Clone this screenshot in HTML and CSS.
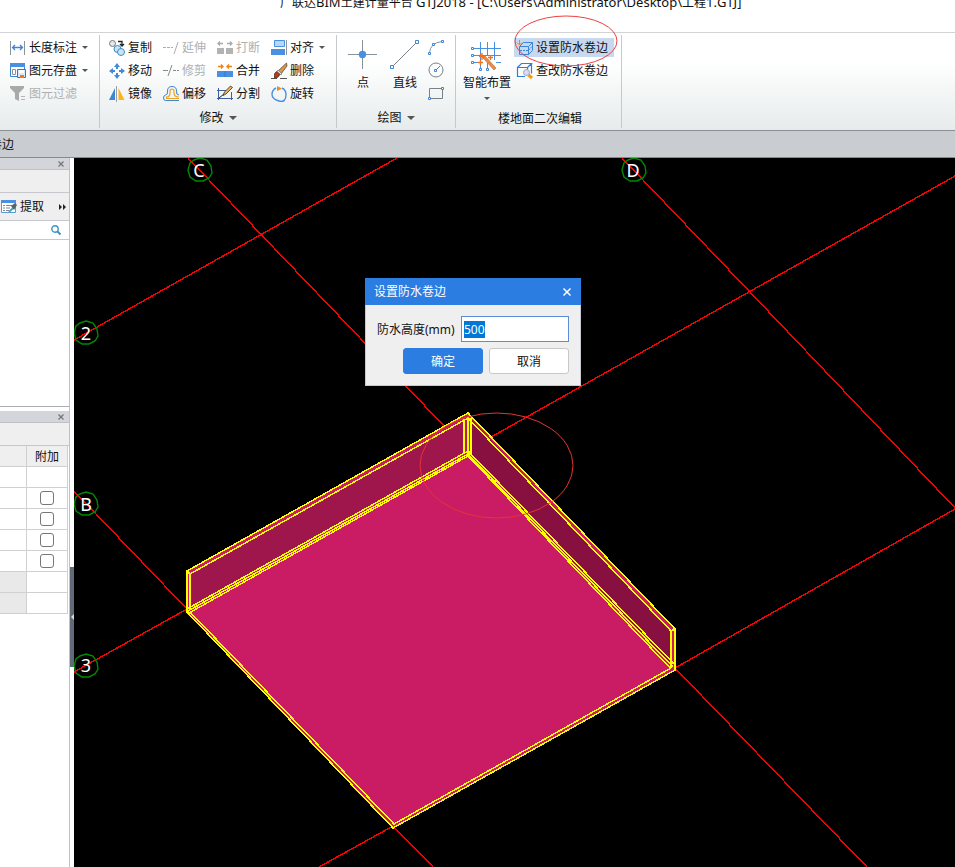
FILE: index.html
```html
<!DOCTYPE html>
<html lang="zh">
<head>
    <meta charset="UTF-8">
    <meta name="viewport" content="width=device-width, initial-scale=1.0">
    <title>广联达BIM土建计量平台 GTJ2018</title>
    <link rel="stylesheet" href="styles.css">
</head>
<body>
    <header class="titlebar">
        <h1><span>广联达</span>BIM<span>土建计量平台</span> GTJ2018 - [C:\Users\Administrator\Desktop\<span>工程</span>1.GTJ]</h1>
    </header>

    <!-- 功能区 -->
    <nav class="ribbon">
        <section class="group group-common">
            <div class="tools">
                <button class="tool" type="button">
                    <svg class="icon" viewBox="0 0 16 16"><path d="M.5 1v14M14.500 1v14" stroke="#8c9399"/><path d="M3 7.500h9M5 5 2.500 7.500 5 10M10 5l2.500 2.500L10 10" stroke="#3c86d8" stroke-width="1.300"/></svg>
                    长度标注<i class="caret"></i>
                </button>
                <button class="tool" type="button">
                    <svg class="icon" viewBox="0 0 16 16"><path d="M.5 1.500h14v12H.5z" fill="#fff" stroke="#3c86d8"/><path d="M0 0h15v4H0z" fill="#4a90e2"/><path d="M2.500 6.500h3v5h-3z" stroke="#8c9399"/><path d="M7.500 6.500h8v8h-8z" fill="#dcebfb" stroke="#2f78c8"/><path d="M9 7h5v3H9z" fill="#fff"/><path d="M10 12h4v3h-4z" fill="#f07820"/></svg>
                    图元存盘<i class="caret"></i>
                </button>
                <button class="tool" type="button" disabled>
                    <svg class="icon" viewBox="0 0 16 16"><path d="M0 0h14v2L9 7v8l-4-2V7L0 2z" fill="#a9a9a9"/><path d="M11 10.500h4M11 13.500h4" stroke="#b5b5b5"/></svg>
                    图元过滤
                </button>
            </div>
        </section>

        <section class="group group-modify">
            <div class="tools">
                <button class="tool" type="button">
                    <svg class="icon" viewBox="0 0 16 16"><circle cx="3.500" cy="3.500" r="3" fill="#e5e7e9" stroke="#707880"/><path d="M9 1.500h4v4M11 4l2 2 2-2" stroke="#222" stroke-width="1.300"/><circle cx="8.500" cy="9" r="3.500" fill="#c9e4f5" stroke="#3b8dc4"/><circle cx="12" cy="12" r="3.500" fill="#c9e4f5" stroke="#3b8dc4"/></svg>
                    复制
                </button>
                <button class="tool" type="button" disabled>
                    <svg class="icon" viewBox="0 0 16 16"><path d="M0 7.500h10" stroke="#adadad" stroke-dasharray="3 1"/><path d="M15 2l-4 12" stroke="#adadad"/></svg>
                    延伸
                </button>
                <button class="tool" type="button" disabled>
                    <svg class="icon" viewBox="0 0 16 16"><path d="M0 8h7v6H0zM9 8h7v6H9z" fill="#b3b3b3"/><path d="M1 3.500h5M10 3.500h5M3 1.500l-2 2 2 2M13 1.500l2 2-2 2" stroke="#aaa" stroke-width="1.300"/></svg>
                    打断
                </button>
                <button class="tool" type="button">
                    <svg class="icon" viewBox="0 0 16 16"><path d="M3.500.5h10v6h-10z" fill="#b8d7f6" stroke="#4a90e2"/><path d="M0 9h14v6H0z" fill="#4a90e2"/><path d="M15.500 0v15" stroke="#8c9399"/></svg>
                    对齐<i class="caret"></i>
                </button>

                <button class="tool" type="button">
                    <svg class="icon" viewBox="0 0 16 16"><path d="M8 0l3 4H5zM8 16l3-4H5zM0 8l4-3v6zM16 8l-4-3v6z" fill="#4189da"/><path d="M8 3v3M8 10v3M3 8h3M10 8h3" stroke="#4189da" stroke-width="2"/></svg>
                    移动
                </button>
                <button class="tool" type="button" disabled>
                    <svg class="icon" viewBox="0 0 16 16"><path d="M0 7.500h5" stroke="#888"/><path d="M10 7.500h6" stroke="#888" stroke-dasharray="3 1"/><path d="M9 2L5 13" stroke="#888"/></svg>
                    修剪
                </button>
                <button class="tool" type="button">
                    <svg class="icon" viewBox="0 0 16 16"><path d="M0 8h16v6H0z" fill="#4a90e2"/><path d="M8 8v6" stroke="#2f78c8"/><path d="M1 3.500h5M10 3.500h5M4 1.500l2 2-2 2M12 1.500l-2 2 2 2" stroke="#ee8416" stroke-width="1.400"/></svg>
                    合并
                </button>
                <button class="tool" type="button">
                    <svg class="icon" viewBox="0 0 16 16"><path d="M0 15.500h6M9 15.500h7" stroke="#555"/><path d="M15.500 0L16 3l-6 8-3-3z" fill="#d99848" stroke="#4c3b2c" stroke-width=".7"/><path d="M7 7l4 4-1 1-4-4z" fill="#eee" stroke="#666" stroke-width=".6"/><path d="M5.500 8.500l3.500 3q-2 4-5.500 3.500Q2.500 10 5.500 8.500z" fill="#b83a16" stroke="#3d2d28" stroke-width=".7"/></svg>
                    删除
                </button>

                <button class="tool" type="button">
                    <svg class="icon" viewBox="0 0 16 16"><path d="M6 2v12H0z" fill="#3c86d8"/><path d="M9.500 2v12h6z" fill="#fbb41c"/><path d="M7.500 0v16" stroke="#9aa0a5"/></svg>
                    镜像
                </button>
                <button class="tool" type="button">
                    <svg class="icon" viewBox="0 0 16 16"><path d="M16 14.500H2.500Q.5 14.500.5 12t2-3q2.500 0 2-4Q4.500.5 9 .5t4.500 4.500q-.5 4 2.500 4" stroke="#3c86d8"/><path d="M16 12.500H3.500v-1.500q3.500 0 3.500-4V5.500Q7 3 9 3t2 2.500V7q0 4 5 4" stroke="#eda31c" stroke-width="1.200"/></svg>
                    偏移
                </button>
                <button class="tool" type="button">
                    <svg class="icon" viewBox="0 0 16 16"><path d="M1.500 2v12M14.500 6v8M0 4.500h9M0 12.500h16" stroke="#3f5fa0"/><path d="M2 12l5-4" stroke="#222"/><path d="M13.500 0l2 1.500L9 8 6 9.500 7.500 6z" fill="#e4b25c" stroke="#3a3028" stroke-width=".8"/></svg>
                    分割
                </button>
                <button class="tool" type="button">
                    <svg class="icon" viewBox="0 0 16 16"><path d="M5 2Q1 4 1 8.500T8 15t7-6.500Q15 4 11 2" stroke="#4a90e2" stroke-width="1.400"/><path d="M6 0l5 2.500L6 5z" fill="#f08a18"/></svg>
                    旋转
                </button>
            </div>
            <button class="group-label" type="button">修改<i class="caret caret-big"></i></button>
        </section>

        <section class="group group-draw">
            <div class="tools">
                <button class="big-tool" type="button">
                    <svg class="big-icon" viewBox="0 0 30 30"><path d="M14.500 0v11M14.500 18v11M0 14.500h11M18 14.500h11" stroke="#87929b"/><circle cx="14.500" cy="14.500" r="3.700" fill="#4a90e2"/></svg>
                    点
                </button>
                <button class="big-tool" type="button">
                    <svg class="big-icon" viewBox="0 0 30 30"><path d="M3 26L26 3" stroke="#77818a"/><path d="M.5 25.500h3v3h-3zM25.500.5h3v3h-3z" fill="#fff" stroke="#3c86d8"/></svg>
                    直线
                </button>
                <div class="shape-tools">
                    <button class="tool" type="button" aria-label="弧线">
                        <svg class="icon" viewBox="0 0 16 16"><path d="M1.500 13Q2 3 14 1.500" stroke="#87929b"/><path d="M.5 12.500h2v2h-2zM4.500 3.500h2v2h-2zM13.500.5h2v2h-2z" fill="#fff" stroke="#3c86d8"/></svg>
                    </button>
                    <button class="tool" type="button" aria-label="圆">
                        <svg class="icon" viewBox="0 0 16 16"><circle cx="8" cy="7" r="7" stroke="#77818a"/><path d="M8 7l4-4" stroke="#3c86d8"/><path d="M6.500 6.500h2v2h-2z" fill="#fff" stroke="#3c86d8"/></svg>
                    </button>
                    <button class="tool" type="button" aria-label="矩形">
                        <svg class="icon" viewBox="0 0 16 16"><path d="M1.500 2.500h13v10h-13z" stroke="#77818a"/><path d="M.5 11.500h2v2h-2zM13.500 1.500h2v2h-2z" fill="#fff" stroke="#3c86d8"/></svg>
                    </button>
                </div>
            </div>
            <button class="group-label" type="button">绘图<i class="caret caret-big"></i></button>
        </section>

        <section class="group group-edit">
            <div class="tools">
                <button class="big-tool" type="button">
                    <svg class="big-icon" viewBox="1 -1 30 30"><path d="M3 7.500h27M3 14.500h27M3 21.500h5M9.500 1v26M16.500 1v13M16.500 22v5M23.500 1v18M25 21.500h5" stroke="#4a90e2"/><path d="M.5 6.500h2v2h-2zM.5 13.500h2v2h-2zM.5 20.500h2v2h-2zM8.500 27.500h2v2h-2zM15.500 27.500h2v2h-2z" fill="#fff" stroke="#3c86d8"/><path d="M12 17l2-2 11 12-2 2z" fill="#e98b4b" stroke="#b86b36" stroke-width=".6"/><path d="M11 12v7M8 15.500h6M9 13l4 4M19.500 14v5M17 16.500h5M9.500 19v5M7 21.500h5" stroke="#ed7524" stroke-width="1.300"/></svg>
                    智能布置<i class="caret"></i>
                </button>
                <div class="edit-tools">
                    <button class="tool active" type="button">
                        <svg class="icon" viewBox="0 0 16 16"><path d="M2.500 6.500h9v8h-9zM2.500 6.500l4-4h9l-4 4M15.500 2.500v8l-4 4" stroke="#3c86d8"/><path d="M3 10.500h8.500l3.500-4" stroke="#3c86d8" stroke-dasharray="2 1"/><path d="M2.500 0v5M0 2.500l2.500 2.500L5 2.500" stroke="#ee8424"/></svg>
                        设置防水卷边
                    </button>
                    <button class="tool" type="button">
                        <svg class="icon" viewBox="0 0 16 16"><path d="M8 13.500H.5v-9h10v3M.5 4.500l4-4h10l-4 4M14.500.5v10" stroke="#2f7fd6" stroke-width="1.200"/><circle cx="9.500" cy="9.500" r="3" fill="#d9dcf2" stroke="#9aa4cc"/><path d="M11.500 12l3.500 3" stroke="#f59a16" stroke-width="3"/></svg>
                        查改防水卷边
                    </button>
                </div>
            </div>
            <div class="group-label">楼地面二次编辑</div>
        </section>
        <svg class="mark" viewBox="0 0 104 52"><ellipse cx="52" cy="26" rx="51" ry="25"/></svg>
    </nav>

    <div class="infobar"><span>卷边</span></div>

    <main class="workspace">
        <!-- 左侧面板 -->
        <aside class="side">
            <section class="panel panel-list">
                <div class="panel-head"><button class="close" type="button" aria-label="关闭"><svg viewBox="0 0 6 6"><path d="M.5.5l5 5M5.500.5l-5 5"/></svg></button></div>
                <div class="panel-tab"></div>
                <div class="panel-tools">
                    <button class="tool" type="button">
                        <svg class="icon" viewBox="0 0 16 16"><path d="M.5 2.500h14v11H.5z" fill="#fff" stroke="#5a98dc"/><path d="M0 1h15v3H0z" fill="#4a90e2"/><path d="M2 6.500h2M5 6.500h6M2 9h2M5 9h4M2 11.500h2M5 11.500h3" stroke="#7c8791"/><path d="M8 13l5-5" stroke="#39aecb" stroke-width="2"/><path d="M10 7l4-3 2 2-3 5z" fill="#596168"/></svg>
                        提取
                    </button>
                    <button class="more" type="button" aria-label="更多"><svg viewBox="0 0 7 6"><path d="M0 0l3 3-3 3zM4 0l3 3-3 3z"/></svg></button>
                </div>
                <div class="search">
                    <input type="text" aria-label="搜索">
                    <svg viewBox="0 0 10 10"><circle cx="4" cy="4" r="3.200"/><path d="M6.500 6.500l3 3" stroke-width="2"/></svg>
                </div>
            </section>

            <section class="panel panel-props">
                <div class="panel-head"><button class="close" type="button" aria-label="关闭"><svg viewBox="0 0 6 6"><path d="M.5.5l5 5M5.500.5l-5 5"/></svg></button></div>
                <div class="panel-tab"></div>
                <table class="props">
                    <thead>
                        <tr><th></th><th>附加</th></tr>
                    </thead>
                    <tbody>
                        <tr><td></td><td></td></tr>
                        <tr><td></td><td><input type="checkbox" aria-label="附加"></td></tr>
                        <tr><td></td><td><input type="checkbox" aria-label="附加"></td></tr>
                        <tr><td></td><td><input type="checkbox" aria-label="附加"></td></tr>
                        <tr><td></td><td><input type="checkbox" aria-label="附加"></td></tr>
                        <tr><td class="shade"></td><td></td></tr>
                        <tr><td class="shade"></td><td></td></tr>
                    </tbody>
                </table>
            </section>
        </aside>
        <div class="splitter">
            <button type="button" aria-label="折叠"><svg viewBox="0 0 3 6"><path d="M3 0v6L0 3z"/></svg></button>
        </div>

        <!-- 绘图区 -->
        <div class="view">
            <svg class="scene" viewBox="74 158 881 709" preserveAspectRatio="xMinYMin slice">
                <defs>
                    <polygon id="bubble" points="0,-12 7,-10 11,-4 12,3 9,8 3,11 -4,11 -10,7 -12,0 -10,-7 -6,-10"/>
                </defs>
                <g class="axis">
                    <path d="M188 158L468 451L675 668L867 867"/>
                    <path d="M622 158L750 292L955 508"/>
                    <path d="M74 491L187 609L393 826L433 867"/>
                    <path d="M74 340L262 234L397 158"/>
                    <path d="M74 672L187 609L468 450L955 176"/>
                    <path d="M319 867L393 826L675 668L955 509"/>
                </g>
                <path fill="#ca1c65" d="M187 571L468 413L675 629V670L393 828L187 612z"/>
                <path fill="#9f164c" d="M190 574L464 419V453L190 609z"/>
                <path fill="#b9185b" d="M464 419L468 416L472 419V454H464z"/>
                <path fill="#881040" d="M472 420L670 631V663L472 456z"/>
                <g class="edge">
                    <path d="M187 612V571L468 413L675 629V670L393 828z"/>
                    <path d="M190 609V574L468 418L671 631V668"/>
                    <path d="M187 571L190 574M671 631L675 629"/>
                    <path d="M464 419V453M468 417V455M471 418V454"/>
                    <path d="M187 609L468 451L674 664"/>
                    <path d="M188 611L468 454L673 667"/>
                    <path d="M189 613L468 456L671 669"/>
                    <path d="M190 612L394 824L671 668"/>
                </g>
                <g class="bubbles">
                    <use href="#bubble" x="200" y="170"/>
                    <use href="#bubble" x="634" y="170"/>
                    <use href="#bubble" x="86" y="333"/>
                    <use href="#bubble" x="86" y="504"/>
                    <use href="#bubble" x="86" y="666"/>
                </g>
                <g class="names">
                    <text x="199" y="177">C</text>
                    <text x="633" y="177">D</text>
                    <text x="86" y="340">2</text>
                    <text x="86" y="511">B</text>
                    <text x="86" y="672">3</text>
                </g>
                <ellipse class="hint" cx="496.500" cy="465.500" rx="76.500" ry="52.500"/>
            </svg>

            <form class="dialog" id="edgeForm">
                <div class="dialog-head">
                    <h2>设置防水卷边</h2>
                    <button type="button" aria-label="关闭"><svg viewBox="0 0 8 8"><path d="M.5.5l7 7M7.500.5l-7 7"/></svg></button>
                </div>
                <div class="dialog-body">
                    <div class="field">
                        <label for="edgeHeight">防水高度(mm)</label>
                        <input type="text" id="edgeHeight" name="edgeHeight" value="500">
                    </div>
                    <div class="actions">
                        <button type="submit" class="primary">确定</button>
                        <button type="button">取消</button>
                    </div>
                </div>
            </form>
        </div>
    </main>

    <script>
        // 打开对话框时选中默认高度
        const edgeHeight = document.getElementById("edgeHeight");
        edgeHeight.focus();
        edgeHeight.select();

        document.getElementById("edgeForm").addEventListener("submit", function(event) {
            event.preventDefault();
        });
    </script>
</body>
</html>
```

FILE: styles.css
```css
* {
    box-sizing: border-box;
}
body {
    display: flex;
    flex-direction: column;
    min-height: 100vh;
    margin: 0;
    overflow: hidden;
    background-color: #fff;
    color: #111;
    font-family: "Noto Sans", "Noto Sans CJK SC", sans-serif;
    font-size: 12px;
    line-height: 18px;
}
button, input {
    font: inherit;
    color: inherit;
    margin: 0;
    padding: 0;
    border: none;
    background: none;
}
svg {
    display: block;
    flex: none;
    fill: none;
    overflow: visible;
}
h1, h2 {
    margin: 0;
    font-size: 12px;
    font-weight: normal;
}

/* 标题栏 */
.titlebar {
    height: 33px;
    overflow: hidden;
    border-bottom: 1px solid #d2d3d5;
}
.titlebar h1 {
    margin-top: -7px;
    padding-left: 280px;
    font-size: 13px;
    white-space: nowrap;
}
.titlebar span {
    font-size: 12px;
}

/* 功能区 */
.ribbon {
    position: relative;
    display: flex;
    height: 98px;
    border-bottom: 1px solid #8b8f94;
    background: linear-gradient(#fff 30%, #e6ebeb);
}
.group {
    display: flex;
    flex-direction: column;
    margin: 2px 0;
    padding-top: 1px;
    border-right: 1px solid #c6c9cb;
}
.tools {
    display: grid;
    grid-auto-rows: 23px;
    height: 69px;
}
.tool {
    display: flex;
    align-items: center;
    gap: 3px;
    white-space: nowrap;
    text-align: left;
}
.tool:disabled {
    color: #b0b0b0;
}
.icon {
    width: 16px;
    height: 16px;
}
.caret {
    width: 0;
    border: 3px solid transparent;
    border-top-color: #555;
    border-bottom: none;
}
.tool .caret {
    margin-left: 2px;
}
.caret-big {
    border-width: 4px;
    border-bottom: none;
}
.group-label {
    display: flex;
    align-items: center;
    justify-content: center;
    gap: 5px;
    height: 23px;
    padding-top: 2px;
}
.group-common {
    width: 100px;
    padding-left: 10px;
}
.group-modify {
    width: 237px;
}
.group-modify .tools {
    grid-template-columns: 54px 54px 54px 1fr;
    padding-left: 9px;
}
.group-draw {
    width: 119px;
}
.group-draw .tools {
    grid-template: 69px / 42px 42px 20px;
    padding-left: 5px;
}
.shape-tools {
    display: grid;
    grid-auto-rows: 23px;
    padding-left: 2px;
}
.big-tool {
    display: flex;
    flex-direction: column;
    align-items: center;
    padding-top: 4px;
    white-space: nowrap;
}
.big-icon {
    width: 30px;
    height: 30px;
    margin-bottom: 4px;
}
.group-edit {
    width: 166px;
}
.group-edit .tools {
    grid-template: 69px / 50px 100px;
    gap: 2px;
    padding-left: 6px;
}
.group-edit .caret {
    margin-top: 5px;
}
.group-edit .group-label {
    padding: 5px 0 0 3px;
}
.edit-tools {
    display: flex;
    flex-direction: column;
    gap: 4px;
    padding-top: 2px;
}
.edit-tools .tool {
    height: 19px;
    padding-left: 3px;
}
.edit-tools .active {
    background-color: #c8d8ef;
}
.mark {
    position: absolute;
    left: 514px;
    top: -18px;
    width: 104px;
    height: 52px;
    stroke: #ed4040;
    pointer-events: none;
}

.infobar {
    height: 27px;
    padding-top: 5px;
    overflow: hidden;
    border-bottom: 1px solid #86898e;
    background-color: #c9ccd1;
}
.infobar span {
    margin-left: -10px;
}

/* 左侧面板 */
.workspace {
    display: flex;
    flex: 1;
}
.side {
    display: flex;
    flex-direction: column;
    gap: 4px;
    width: 70px;
    border-right: 1px solid #bfc1c8;
}
.panel-list {
    height: 249px;
    border-bottom: 1px solid #aaacb2;
}
.panel-head {
    display: flex;
    align-items: center;
    justify-content: flex-end;
    height: 12px;
    padding-right: 5px;
    border-bottom: 1px solid #bfc1c8;
    background-color: #d3d5da;
}
.close svg {
    width: 6px;
    height: 6px;
    stroke: #777;
    stroke-width: 1.3;
}
.panel-tab {
    height: 23px;
    border-bottom: 1px solid #c6c8ce;
    background-color: #efefef;
}
.panel-tools {
    display: flex;
    align-items: center;
    justify-content: space-between;
    height: 28px;
    padding: 1px 3px 0 1px;
    border-bottom: 1px solid #c6c8ce;
    background-color: #efefef;
}
.more svg {
    width: 7px;
    height: 6px;
    fill: #222;
}
.search {
    display: flex;
    align-items: center;
    height: 19px;
    padding-right: 8px;
    border-bottom: 1px solid #c6c8ce;
}
.search input {
    flex: 1;
    min-width: 0;
    height: 16px;
}
.search svg {
    width: 10px;
    height: 10px;
    stroke: #3c94c8;
    stroke-width: 1.4;
}
.props {
    width: 68px;
    border-collapse: separate;
    border-spacing: 0;
    table-layout: fixed;
}
.props th, .props td {
    height: 21px;
    padding: 0;
    border-right: 1px solid #d0d0d0;
    border-bottom: 1px solid #d0d0d0;
    line-height: 18px;
    text-align: center;
}
.props th:first-child {
    width: 27px;
}
.props th {
    padding-top: 2px;
    background-color: #efefef;
    font-weight: normal;
}
.props .shade {
    background-color: #e9e9e9;
}
.props input {
    display: block;
    width: 14px;
    height: 14px;
    margin: 0 auto;
    appearance: none;
    border: 1px solid #777;
    border-radius: 3px;
    background-color: #fff;
}
.props input:checked {
    background-color: #2b7de1;
}
.splitter {
    width: 4px;
    padding-top: 409px;
}
.splitter button {
    display: flex;
    align-items: center;
    justify-content: flex-end;
    width: 4px;
    height: 100px;
    background-color: #626a78;
}
.splitter svg {
    width: 3px;
    height: 6px;
    fill: #d5d8dd;
}

/* 绘图区 */
.view {
    position: relative;
    flex: 1;
    overflow: hidden;
    background-color: #000;
}
.scene {
    position: absolute;
    width: 100%;
    height: 100%;
}
.axis {
    stroke: #fa0000;
    stroke-width: 1.4;
    shape-rendering: crispEdges;
}
.edge {
    stroke: #ffff00;
    stroke-width: 1.5;
    shape-rendering: crispEdges;
}
.bubbles {
    stroke: #008a00;
    stroke-width: 1.4;
}
.names {
    fill: #fff;
    font-size: 18px;
    text-anchor: middle;
}
.hint {
    stroke: #e63434;
}

/* 对话框 */
.dialog {
    position: absolute;
    left: 291px;
    top: 120px;
    width: 216px;
    background-color: #efefef;
}
.dialog-head {
    display: flex;
    align-items: center;
    justify-content: space-between;
    height: 27px;
    padding: 1px 10px 0 9px;
    background-color: #2b7de1;
    color: #fff;
}
.dialog-head svg {
    width: 8px;
    height: 8px;
    stroke: #fff;
    stroke-width: 1.5;
}
.dialog-body {
    padding: 11px;
    border: 1px solid #c5c9d0;
    border-top: none;
}
.field {
    display: flex;
    align-items: center;
    justify-content: space-between;
    margin-bottom: 6px;
    white-space: nowrap;
}
.field label {
    padding-top: 2px;
}
.field input {
    width: 108px;
    height: 26px;
    padding: 0 2px;
    border: 1px solid #5b8dd6;
    outline: none;
    background-color: #fff;
}
.field input::selection {
    background-color: #0078d7;
    color: #fff;
}
.actions {
    display: flex;
    justify-content: flex-end;
    gap: 6px;
}
.actions button {
    width: 80px;
    height: 26px;
    padding-top: 1px;
    border: 1px solid #c8c8c8;
    border-radius: 3px;
    background-color: #fff;
}
.actions .primary {
    border-color: #2b7de1;
    background-color: #2b7de1;
    color: #fff;
}
```
